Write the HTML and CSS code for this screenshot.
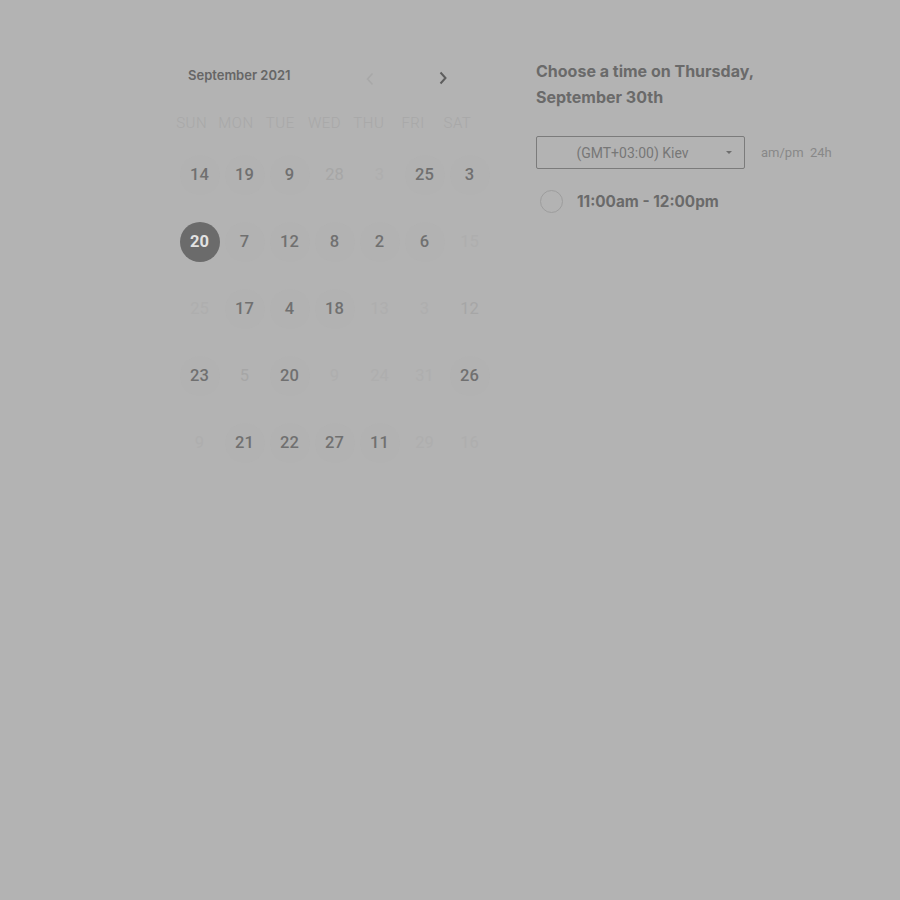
FILE: index.html
```html
<!DOCTYPE html>
<html lang="en">
<head>
<meta charset="utf-8">
<title>Schedule</title>
<link rel="stylesheet" href="styles.css">
</head>
<body>
<div class="page">
  <div class="calendar">
    <div class="cal-head">
      <span class="month">September 2021</span>
      <div class="nav">
        <span class="arrow prev"><svg width="10" height="14" viewBox="0 0 10 14"><path d="M7.5 1.5 L2.5 7 L7.5 12.5" fill="none" stroke="currentColor" stroke-width="1.6"/></svg></span>
        <span class="arrow next"><svg width="10" height="14" viewBox="0 0 10 14"><path d="M2.5 1.5 L7.5 7 L2.5 12.5" fill="none" stroke="currentColor" stroke-width="2"/></svg></span>
      </div>
    </div>
    <div class="weekdays">
      <span>SUN</span><span>MON</span><span>TUE</span><span>WED</span><span>THU</span><span>FRI</span><span>SAT</span>
    </div>
    <div class="days">
      <span class="day on">14</span><span class="day on">19</span><span class="day on">9</span><span class="day off">28</span><span class="day off faint">3</span><span class="day on">25</span><span class="day on">3</span>
      <span class="day sel">20</span><span class="day on">7</span><span class="day on">12</span><span class="day on">8</span><span class="day on">2</span><span class="day on">6</span><span class="day off faint">15</span>
      <span class="day off faint">25</span><span class="day on">17</span><span class="day on">4</span><span class="day on">18</span><span class="day off faint">13</span><span class="day off faint">3</span><span class="day off">12</span>
      <span class="day on">23</span><span class="day off">5</span><span class="day on">20</span><span class="day off faint">9</span><span class="day off faint">24</span><span class="day off faint">31</span><span class="day on">26</span>
      <span class="day off faint">9</span><span class="day on">21</span><span class="day on">22</span><span class="day on">27</span><span class="day on">11</span><span class="day off faint">29</span><span class="day off faint">16</span>
    </div>
  </div>
  <div class="times">
    <h2 class="title">Choose a time on Thursday, September 30th</h2>
    <div class="tz-row">
      <div class="select">
        <span class="select-text">(GMT+03:00) Kiev</span>
        <span class="caret"></span>
      </div>
      <span class="format">am/pm&nbsp; 24h</span>
    </div>
    <div class="slot">
      <span class="radio"></span>
      <span class="slot-text">11:00am - 12:00pm</span>
    </div>
  </div>
</div>
</body>
</html>
```
FILE: styles.css
```css
html, body {
  margin: 0;
  padding: 0;
  background: #b3b3b3;
  height: 100%;
}

body {
  font-family: Roboto, "Liberation Sans", sans-serif;
  color: #6b6b6b;
}

.page {
  display: flex;
  padding: 62px 0 0 176px;
  gap: 45px;
}

.calendar {
  width: 315px;
}

.cal-head {
  display: flex;
  align-items: center;
  height: 26px;
}

.month {
  font-family: Inter, "Noto Sans", sans-serif;
  font-weight: 600;
  font-size: 13px;
  color: #666;
  padding-left: 12px;
}

.nav {
  display: flex;
  align-items: center;
  margin: 7px 0 0 73px;
  gap: 61px;
}

.arrow {
  display: flex;
  width: 12px;
  height: 14px;
  justify-content: center;
  align-items: center;
}

.arrow.prev {
  color: #a8a8a8;
}

.arrow.next {
  color: #5e5e5e;
  margin-top: -2px;
}

.weekdays {
  display: grid;
  grid-template-columns: repeat(7, 44.3px);
  margin: 25px 0 0 -6.5px;
  height: 20px;
  align-items: center;
  font-weight: 300;
  font-size: 15px;
  letter-spacing: 0.5px;
  color: #a8a8a8;
  text-align: center;
}

.days {
  display: grid;
  grid-template-columns: repeat(7, 45px);
  grid-auto-rows: 67px;
  margin: 8px 0 0 1px;
  justify-items: center;
  align-items: center;
}

.day {
  width: 40px;
  height: 40px;
  border-radius: 50%;
  display: flex;
  align-items: center;
  justify-content: center;
  font-size: 16.5px;
  font-weight: 500;
}

.day.on {
  background: #b2b2b2;
  color: #707070;
}

.day.off {
  color: #a6a6a6;
  font-weight: 400;
}

.day.off.faint {
  color: #aeaeae;
}

.day.sel {
  background: #6b6b6b;
  color: #e2e2e2;
  font-weight: 700;
}

.times {
  margin-top: -4px;
  font-family: Inter, "Noto Sans", sans-serif;
}

.title {
  margin: 0;
  font-size: 16px;
  font-weight: 700;
  line-height: 26px;
  color: #6a6a6a;
  width: 240px;
}

.tz-row {
  display: flex;
  align-items: center;
  margin-top: 26px;
}

.select {
  box-sizing: border-box;
  width: 209px;
  height: 33px;
  border: 1px solid #7b7b7b;
  border-radius: 2px;
  display: flex;
  align-items: center;
  padding-right: 12px;
}

.select-text {
  flex: 1;
  text-align: center;
  font-family: Roboto, "Liberation Sans", sans-serif;
  font-size: 14px;
  color: #777;
  padding-left: 2px;
}

.caret {
  width: 0;
  height: 0;
  border-left: 3px solid transparent;
  border-right: 3px solid transparent;
  border-top: 3.5px solid #6e6e6e;
}

.format {
  margin-left: 16px;
  font-family: Roboto, "Liberation Sans", sans-serif;
  font-size: 13px;
  color: #888;
}

.slot {
  display: flex;
  align-items: center;
  margin-top: 21px;
  padding-left: 4px;
}

.radio {
  box-sizing: border-box;
  width: 23px;
  height: 23px;
  border: 1.5px solid #9d9d9d;
  border-radius: 50%;
}

.slot-text {
  margin-left: 14px;
  font-size: 15.3px;
  font-weight: 700;
  color: #6a6a6a;
}
```
